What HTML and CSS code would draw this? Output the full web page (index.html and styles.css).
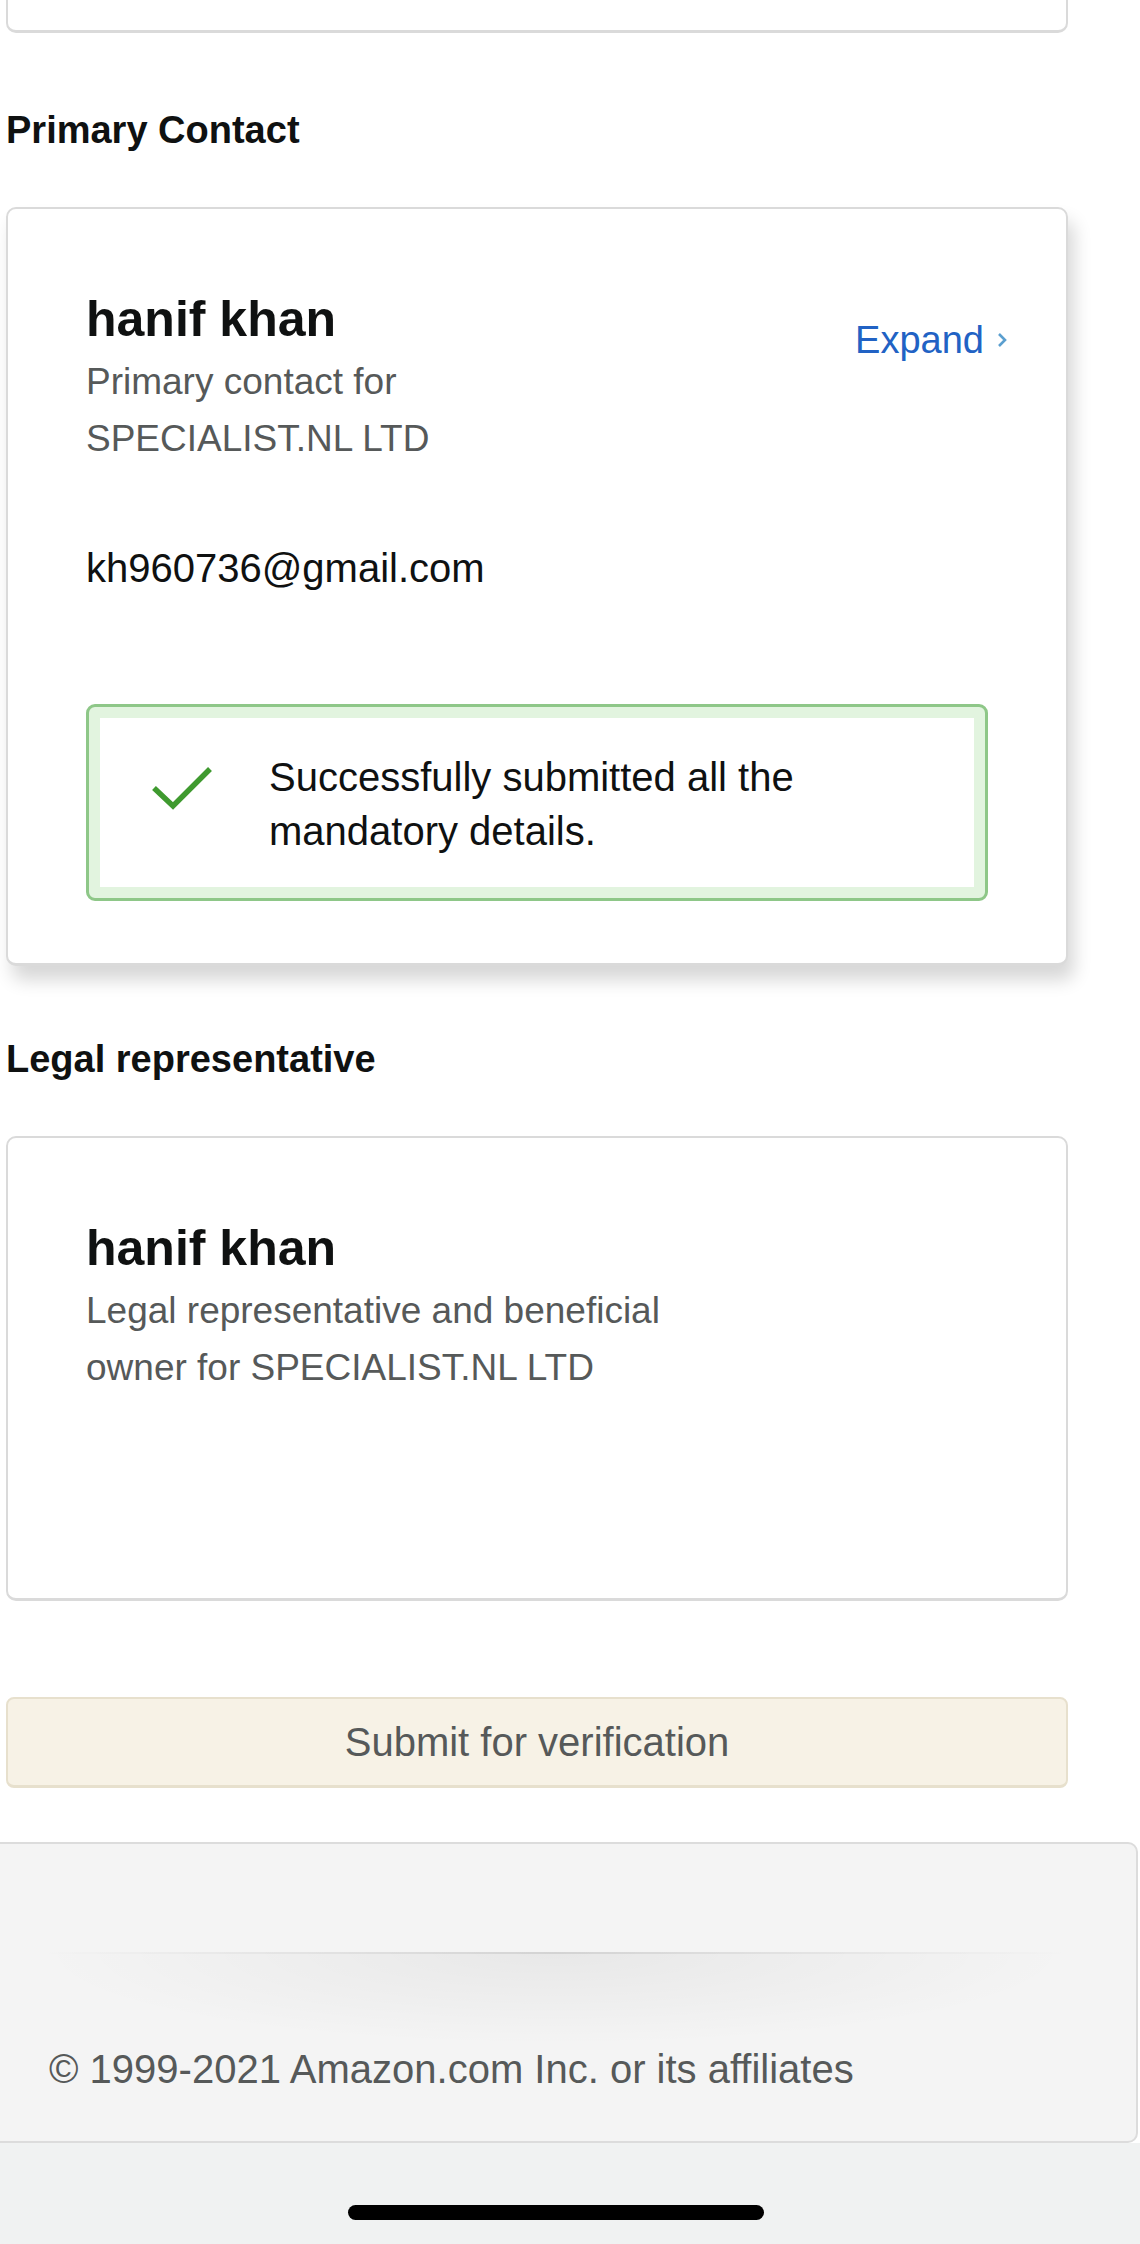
FILE: index.html
```html
<!DOCTYPE html>
<html lang="en">
<head>
    <meta charset="UTF-8">
    <meta name="viewport" content="width=device-width, initial-scale=1.0">
    <title>Seller verification</title>
    <link rel="stylesheet" href="styles.css">
</head>
<body>
    <div class="page">
        <!-- end of the card above -->
        <div class="card card-top"></div>

        <h3 class="section-title">Primary Contact</h3>
        <div class="card card-raised">
            <div class="card-head">
                <div class="person person-short">
                    <div class="person-name">hanif khan</div>
                    <div class="person-role">Primary contact for SPECIALIST.NL LTD</div>
                </div>
                <a class="expand" href="javascript:;">Expand
                    <svg width="12" height="16" viewBox="0 0 12 16"><polyline points="3,2 9,8 3,14" fill="none" stroke="#5b9fcf" stroke-width="2.6"/></svg>
                </a>
            </div>
            <div class="person-email">kh960736@gmail.com</div>
            <div class="alert">
                <div class="alert-inner">
                    <svg class="alert-icon" width="62" height="44" viewBox="0 0 62 44"><polyline points="3,22 22,40 59,3" fill="none" stroke="#3f9a2f" stroke-width="5.5"/></svg>
                    <div class="alert-text">Successfully submitted all the mandatory details.</div>
                </div>
            </div>
        </div>

        <h3 class="section-title section-title-next">Legal representative</h3>
        <div class="card card-plain">
            <div class="person">
                <div class="person-name">hanif khan</div>
                <div class="person-role">Legal representative and beneficial owner for SPECIALIST.NL LTD</div>
            </div>
        </div>

        <button class="submit-btn">Submit for verification</button>
    </div>

    <div class="footer">
        <div class="footer-divider"></div>
        <div class="copyright">&copy; 1999-2021 Amazon.com Inc. or its affiliates</div>
    </div>
    <div class="bottom-bar"></div>
    <div class="home-indicator"></div>
</body>
</html>
```

FILE: styles.css
```css
*{
    margin: 0;
    padding: 0;
    box-sizing: border-box;
}
body{
    font-family: "Liberation Sans", Arial, sans-serif;
    color: #0f1111;
    background-color: #fff;
    width: 1140px;
    position: relative;
    overflow: hidden;
}
.page{
    width: 1062px;
    margin-left: 6px;
}
.card{
    border: 2px solid #dadada;
    border-bottom-width: 3px;
    border-radius: 10px;
    background-color: #fff;
    padding: 80px 78px 0 78px;
}
.card-top{
    height: 33px;
    padding: 0;
    border-top: none;
    border-radius: 0 0 10px 10px;
}
.section-title{
    font-size: 38px;
    line-height: 46px;
    font-weight: bold;
    margin-top: 74px;
    margin-bottom: 54px;
}
.section-title-next{
    margin-top: 70px;
}
.card-raised{
    padding-bottom: 62px;
    box-shadow: 6px 14px 18px rgba(0, 0, 0, 0.16);
}
.card-head{
    display: flex;
    justify-content: space-between;
    align-items: flex-start;
    margin-right: -20px;
}
.person{
    max-width: 600px;
}
.person-short{
    max-width: 420px;
}
.person-name{
    font-size: 50px;
    line-height: 60px;
    font-weight: bold;
}
.person-role{
    font-size: 37px;
    line-height: 57px;
    margin-top: 4px;
    color: #565959;
}
.expand{
    display: flex;
    align-items: center;
    gap: 12px;
    margin-top: 28px;
    font-size: 38px;
    line-height: 46px;
    color: #2162c4;
    text-decoration: none;
}
.person-email{
    font-size: 40px;
    line-height: 48px;
    margin-top: 77px;
}
.alert{
    margin-top: 112px;
    border: 3px solid #8ec788;
    border-radius: 9px;
    background-color: #e2f4df;
    padding: 11px 11px;
}
.alert-inner{
    background-color: #fff;
    display: flex;
    align-items: flex-start;
    padding: 32px 0 29px 51px;
    min-height: 169px;
}
.alert-icon{
    margin-top: 16px;
}
.alert-text{
    font-size: 40px;
    line-height: 54px;
    margin-left: 56px;
    max-width: 600px;
}
.card-plain{
    padding-bottom: 202px;
}
.submit-btn{
    display: block;
    width: 100%;
    height: 91px;
    margin-top: 96px;
    background-color: #f7f2e6;
    border: 2px solid #e7e0cd;
    border-bottom-width: 3px;
    border-radius: 8px;
    font-family: "Liberation Sans", Arial, sans-serif;
    font-size: 40px;
    color: #565959;
}
.footer{
    margin-top: 54px;
    margin-left: -12px;
    width: 1150px;
    height: 301px;
    background-color: #f4f4f4;
    border: 2px solid #dcdcdc;
    border-radius: 0 10px 10px 0;
    padding: 108px 0 0 59px;
}
.footer-divider{
    margin-left: -12px;
    width: 1036px;
    height: 93px;
    background:
        linear-gradient(to right, rgba(0,0,0,0), rgba(0,0,0,0.09), rgba(0,0,0,0)) top / 100% 2px no-repeat,
        radial-gradient(ellipse 50% 100% at 50% 0, rgba(0,0,0,0.05), rgba(0,0,0,0));
}
.copyright{
    font-size: 40px;
    line-height: 48px;
    color: #565959;
}
.bottom-bar{
    height: 110px;
    background-color: #f0f2f2;
}
.home-indicator{
    position: absolute;
    left: 348px;
    top: 2205px;
    width: 416px;
    height: 15px;
    border-radius: 8px;
    background-color: #000;
}
```
